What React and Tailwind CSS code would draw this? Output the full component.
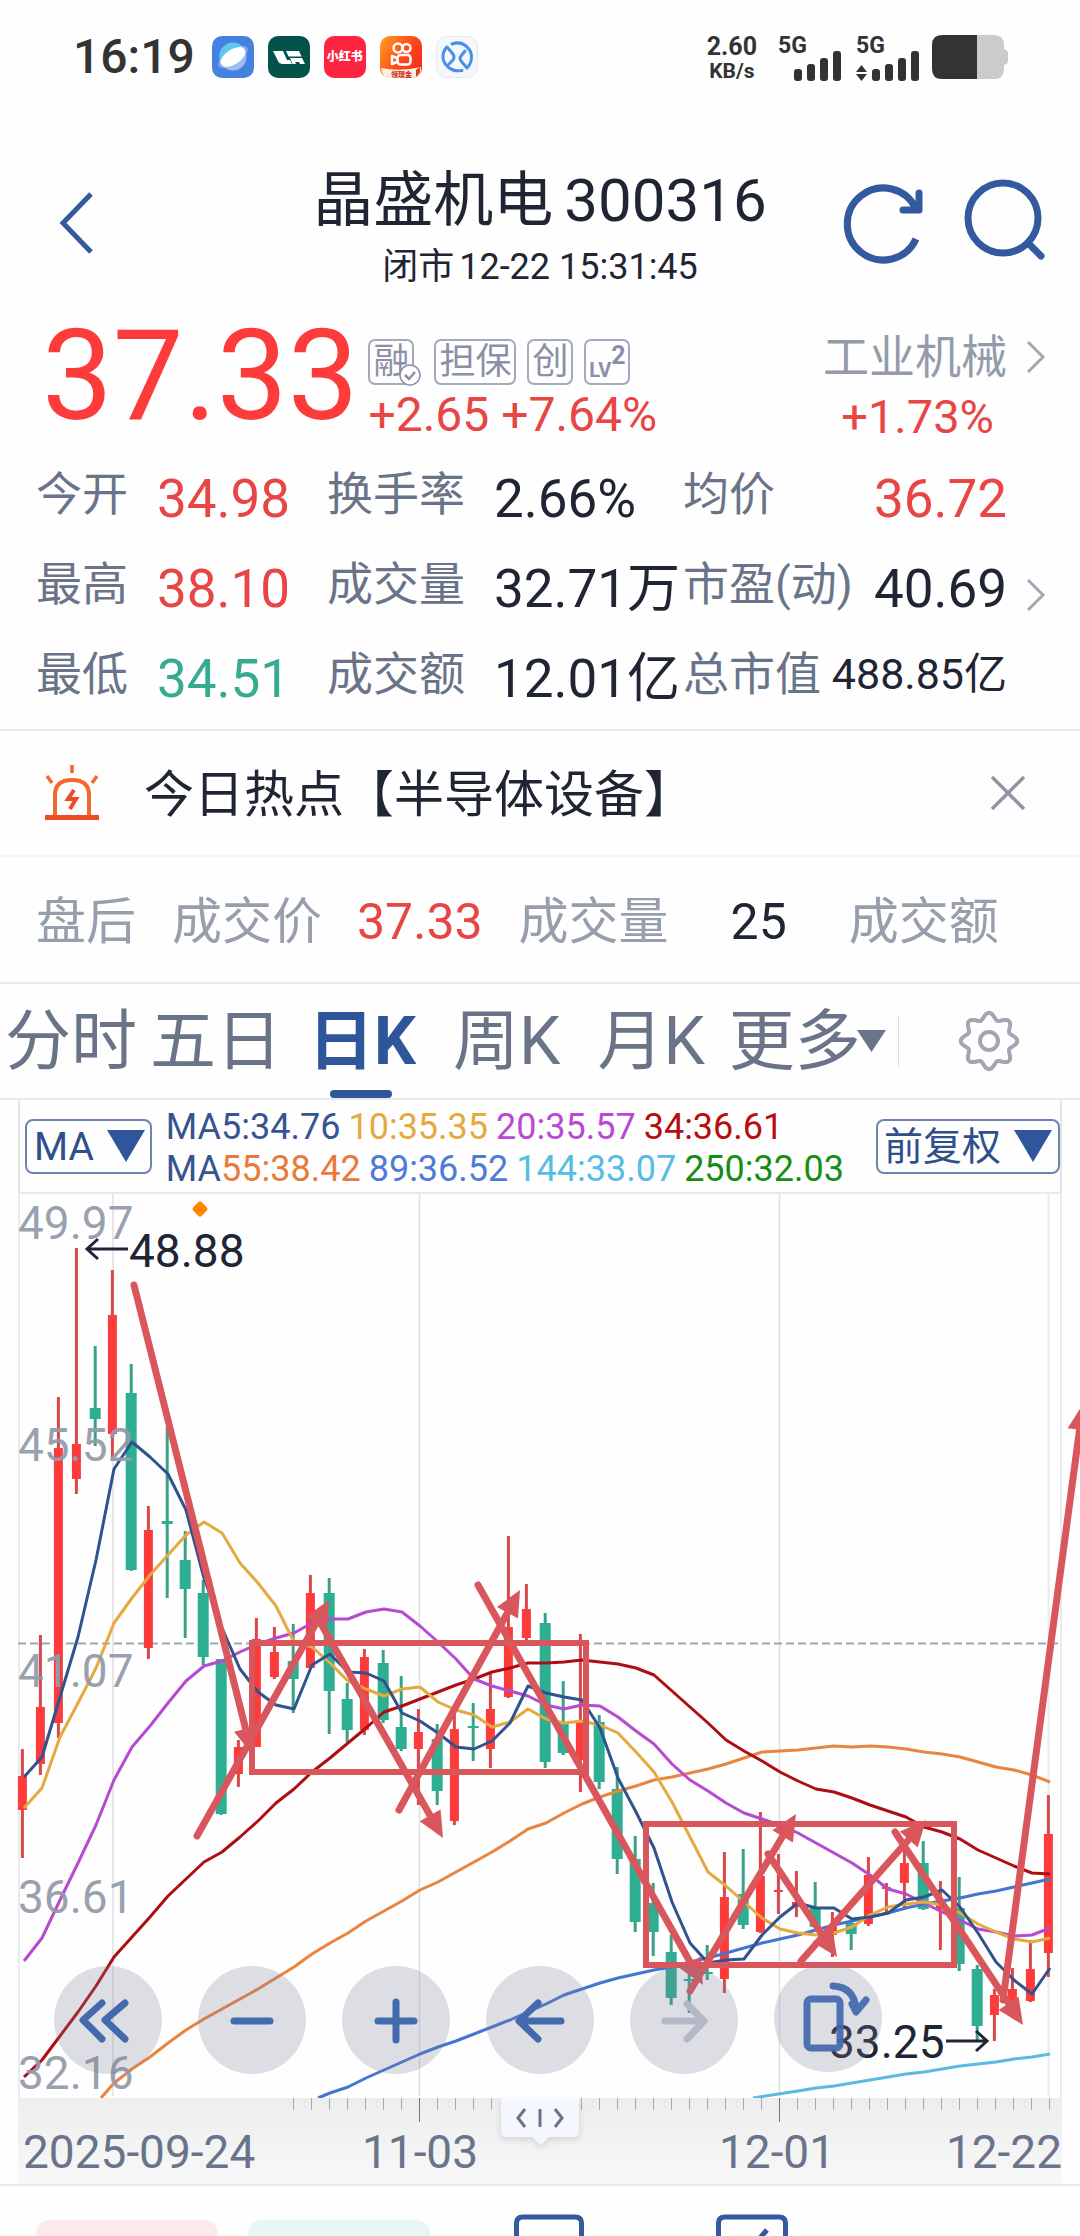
import React from "react";

const RISE = "#fd3b3b";
const FALL = "#2eae93";
const PEN = "#d9575c";

/* Candles: [trend, high, body top, body bottom, low] in chart units, oldest first. */
const candles = [
  ["r", 1749, 1776, 1810, 1858], ["r", 1635, 1707, 1764, 1775], ["r", 1397, 1448, 1723, 1738],
  ["r", 1248, 1444, 1479, 1494], ["f", 1346, 1408, 1419, 1446], ["r", 1270, 1315, 1434, 1459],
  ["f", 1364, 1393, 1570, 1571], ["r", 1506, 1530, 1648, 1659], ["f", 1427, 1521, 1524, 1598],
  ["f", 1531, 1560, 1589, 1638], ["f", 1580, 1593, 1657, 1665], ["f", 1659, 1659, 1814, 1815],
  ["r", 1740, 1747, 1774, 1787], ["r", 1618, 1639, 1747, 1747], ["r", 1627, 1652, 1677, 1679],
  ["f", 1624, 1661, 1679, 1713], ["r", 1575, 1593, 1668, 1669], ["f", 1578, 1593, 1691, 1734],
  ["f", 1683, 1699, 1730, 1742], ["r", 1649, 1657, 1730, 1735], ["f", 1650, 1663, 1720, 1723],
  ["f", 1676, 1727, 1749, 1751], ["r", 1709, 1732, 1749, 1805], ["f", 1724, 1739, 1791, 1805],
  ["r", 1713, 1729, 1821, 1825], ["f", 1703, 1726, 1728, 1761], ["r", 1673, 1709, 1749, 1768],
  ["r", 1536, 1627, 1697, 1698], ["r", 1584, 1609, 1638, 1646], ["f", 1613, 1623, 1762, 1768],
  ["f", 1681, 1723, 1753, 1755], ["r", 1634, 1722, 1760, 1792], ["f", 1715, 1722, 1782, 1789],
  ["f", 1767, 1789, 1859, 1874], ["f", 1836, 1859, 1922, 1932], ["f", 1883, 1903, 1932, 1956],
  ["f", 1935, 1952, 1998, 2005], ["f", 1970, 1979, 1981, 2013], ["f", 1945, 1972, 1974, 1980],
  ["r", 1852, 1897, 1979, 1993], ["f", 1849, 1894, 1925, 1929], ["r", 1812, 1876, 1932, 1933],
  ["r", 1854, 1890, 1892, 1914], ["r", 1871, 1902, 1907, 1917], ["f", 1882, 1907, 1927, 1928],
  ["r", 1912, 1925, 1935, 1957], ["f", 1918, 1923, 1934, 1950], ["r", 1857, 1875, 1924, 1926],
  ["r", 1883, 1887, 1889, 1912], ["r", 1848, 1863, 1883, 1909], ["f", 1841, 1863, 1909, 1910],
  ["r", 1881, 1900, 1909, 1950], ["f", 1877, 1908, 1964, 1971], ["f", 1965, 1969, 2026, 2040],
  ["r", 1989, 1995, 2015, 2041], ["r", 1968, 1989, 2002, 2003], ["r", 1940, 1969, 2001, 2002],
  ["r", 1795, 1834, 1953, 1977],
];

const ma5 = [1777, 1757, 1697, 1637, 1560, 1469, 1442, 1457, 1474, 1510, 1578, 1628, 1669, 1692, 1705, 1709, 1665, 1654, 1672, 1673, 1681, 1713, 1721, 1733, 1747, 1749, 1741, 1723, 1686, 1693, 1697, 1700, 1728, 1778, 1812, 1848, 1902, 1943, 1963, 1960, 1959, 1935, 1917, 1903, 1908, 1908, 1919, 1917, 1913, 1900, 1897, 1890, 1907, 1933, 1962, 1980, 1994, 1968];
const ma10 = [1808, 1788, 1737, 1703, 1668, 1623, 1598, 1575, 1555, 1535, 1522, 1533, 1563, 1583, 1606, 1642, 1647, 1663, 1681, 1689, 1696, 1689, 1687, 1702, 1710, 1715, 1727, 1722, 1709, 1719, 1723, 1721, 1725, 1733, 1752, 1772, 1802, 1837, 1872, 1886, 1902, 1918, 1929, 1933, 1935, 1933, 1927, 1915, 1907, 1904, 1902, 1905, 1913, 1924, 1932, 1939, 1942, 1938];
const ma20 = [1961, 1938, 1900, 1863, 1825, 1780, 1747, 1726, 1703, 1681, 1666, 1661, 1652, 1644, 1638, 1633, 1623, 1619, 1619, 1612, 1609, 1612, 1626, 1642, 1659, 1679, 1686, 1691, 1696, 1705, 1709, 1705, 1706, 1717, 1731, 1744, 1764, 1780, 1791, 1803, 1813, 1819, 1825, 1833, 1843, 1853, 1863, 1875, 1889, 1894, 1903, 1912, 1920, 1929, 1932, 1936, 1935, 1928];
const ma34 = [2077, 2060, 2036, 2012, 1986, 1957, 1937, 1917, 1896, 1879, 1862, 1852, 1837, 1821, 1803, 1789, 1772, 1758, 1743, 1728, 1712, 1706, 1699, 1692, 1685, 1679, 1672, 1668, 1663, 1663, 1662, 1660, 1662, 1664, 1668, 1675, 1691, 1707, 1723, 1740, 1751, 1761, 1772, 1781, 1789, 1792, 1798, 1805, 1811, 1817, 1827, 1832, 1839, 1850, 1858, 1866, 1873, 1874];
const ma55 = [2083, 2069, 2057, 2043, 2030, 2019, 2009, 1999, 1989, 1978, 1967, 1954, 1943, 1933, 1921, 1911, 1901, 1890, 1882, 1872, 1862, 1852, 1841, 1829, 1823, 1813, 1804, 1797, 1791, 1786, 1780, 1777, 1773, 1769, 1764, 1758, 1752, 1751, 1750, 1748, 1746, 1747, 1746, 1747, 1749, 1752, 1754, 1757, 1762, 1767, 1770, 1775, 1782];
const ma89 = [2093, 2087, 2078, 2070, 2062, 2054, 2047, 2041, 2034, 2027, 2020, 2012, 2004, 1995, 1989, 1983, 1978, 1974, 1970, 1967, 1962, 1958, 1953, 1948, 1943, 1939, 1935, 1930, 1925, 1921, 1917, 1913, 1908, 1904, 1901, 1898, 1894, 1891, 1887, 1883, 1879];
const ma144 = [2091, 2088, 2086, 2083, 2080, 2077, 2074, 2072, 2069, 2066, 2064, 2062, 2059, 2057, 2054];

const track = (ys, from = 0, lead = "") =>
  (lead + " " + ys.map((y, i) => `${24 + (i + from) * 18},${y}`).join(" ")).trim();

const averages = [
  { color: "#e8853f", points: track(ma55, 5, "101,2098") },
  { color: "#5bbbdf", points: track(ma144, 43, "753,2098") },
  { color: "#4475d0", points: track(ma89, 17, "318,2098") },
  { color: "#ae0e12", points: track(ma34) },
  { color: "#b64ad0", points: track(ma20) },
  { color: "#e5a93f", points: track(ma10) },
  { color: "#30538f", points: track(ma5) },
];

/* Hand-drawn arrows: start x, start y, tip x, tip y. */
const arrows = [
  [134, 1285, 252, 1754], [197, 1836, 329, 1600], [320, 1622, 443, 1838], [399, 1810, 520, 1590],
  [478, 1585, 703, 1985], [690, 1991, 796, 1814], [768, 1854, 837, 1957], [801, 1961, 926, 1820],
  [895, 1832, 1023, 2025], [1003, 2000, 1083, 1404],
];

function PenArrow({ x1, y1, x2, y2 }) {
  const len = Math.hypot(x2 - x1, y2 - y1);
  const ux = (x2 - x1) / len;
  const uy = (y2 - y1) / len;
  const bx = x2 - ux * 26;
  const by = y2 - uy * 26;
  return (
    <g>
      <line x1={x1} y1={y1} x2={bx} y2={by} stroke={PEN} strokeWidth="7" strokeLinecap="round" />
      <polygon points={`${x2},${y2} ${bx - uy * 12},${by + ux * 12} ${bx + uy * 12},${by - ux * 12}`} fill={PEN} />
    </g>
  );
}

function CandleChart() {
  return (
    <svg viewBox="0 1192 1080 906" className="block w-full overflow-visible" role="img" aria-label="日K">
      <g stroke="#dfe0e3" strokeWidth="1.5">
        <path d="M113 1192V2096M419.500 1192V2096M779.500 1192V2096" />
        <path d="M19 1192V2098M1048.500 1192V2096M1061 1192V2098" stroke="#e9eaec" strokeWidth="2" />
        <path d="M18 1193H1062" stroke="#e9eaec" strokeWidth="2" />
      </g>
      <path d="M18 1643.500H1061" stroke="#9da6b3" strokeWidth="2" strokeDasharray="8 4" />
      {candles.map(([t, high, top, bottom, low], i) => {
        const up = t === "r";
        const cx = (up ? 22.4 : 23.2) + i * 18;
        const w = up ? 9 : 11;
        return (
          <g key={i} fill={up ? RISE : FALL}>
            <rect x={cx - 1.5} y={high} width="3" height={low - high} fill={up ? "#d9494b" : "#3aa189"} />
            <rect x={cx - w / 2} y={top} width={w} height={bottom - top} />
          </g>
        );
      })}
      <g fill="none" strokeWidth="3" strokeLinejoin="round">
        {averages.map((a) => (
          <polyline key={a.color} points={a.points} stroke={a.color} />
        ))}
      </g>
      <g fill="#939baa" fillOpacity="0.95" fontSize="46" fontFamily="Roboto, sans-serif">
        <text x="18" y="1239">49.97</text>
        <text x="18" y="1461">45.52</text>
        <text x="18" y="1687">41.07</text>
        <text x="18" y="1913">36.61</text>
        <text x="18" y="2089">32.16</text>
      </g>
      <path d="M200 1204L205 1209L200 1214L195 1209Z" fill="#ff8400" stroke="#ff8400" strokeWidth="5" strokeLinejoin="round" />
      <g fill="#1f2533" fontSize="46" fontFamily="Roboto, sans-serif">
        <text x="129" y="1267">48.88</text>
        <text x="829" y="2058">33.25</text>
      </g>
      <g fill="none" stroke="#1f2533" strokeWidth="3">
        <path d="M128 1249H87M98 1239L87 1249L98 1259" />
        <path d="M946 2041H987M976 2031L987 2041L976 2051" />
      </g>
      <g fill="none" stroke={PEN} strokeWidth="6">
        <rect x="252" y="1643" width="334" height="129" />
        <rect x="646" y="1824" width="308" height="141" />
      </g>
      {arrows.map(([x1, y1, x2, y2], i) => (
        <PenArrow key={i} x1={x1} y1={y1} x2={x2} y2={y2} />
      ))}
    </svg>
  );
}

function AppIcons() {
  return (
    <div className="flex gap-[14px]">
      <svg className="size-[42px]" viewBox="0 0 42 42">
        <rect width="42" height="42" rx="10" fill="#4582e0" />
        <circle cx="21" cy="21" r="13.500" fill="#9dbcf0" />
        <path d="M8 24A13.500 13.500 0 0 1 33 14Z" fill="#5cc8f2" />
        <ellipse cx="21" cy="21" rx="17" ry="7" transform="rotate(-33 21 21)" fill="#a9c4f3" opacity=".6" />
        <ellipse cx="21" cy="21" rx="14" ry="7.500" transform="rotate(-33 21 21)" fill="#fff" />
      </svg>
      <svg className="size-[42px]" viewBox="0 0 42 42">
        <rect width="42" height="42" rx="10" fill="#04534b" />
        <path d="M5 15H15L19 24H22L24 28H15Q11 28 10 25Z" fill="#fff" />
        <path d="M18 15H31L33.500 20.500H20.500ZM22 22H34L37 28H32L31 26H27L28 28H24.500Z" fill="#fff" />
      </svg>
      <span className="flex size-[42px] items-center justify-center rounded-[10px] bg-[#fe2341] text-[12px] leading-none font-black text-white">小红书</span>
      <svg className="size-[42px]" viewBox="0 0 42 42">
        <defs>
          <linearGradient id="kwai" x1="0" y1="0" x2="1" y2="0.600">
            <stop offset="0" stopColor="#ffa41c" />
            <stop offset="0.600" stopColor="#fd4a1b" />
            <stop offset="1" stopColor="#f5321c" />
          </linearGradient>
        </defs>
        <rect width="42" height="42" rx="10" fill="url(#kwai)" />
        <path d="M1 32Q20 36 41 31V34Q40 42 32 42H10Q2 42 1 32Z" fill="#fdeedd" />
        <g fill="none" stroke="#fff" strokeWidth="2.500">
          <circle cx="18" cy="12" r="4.500" />
          <circle cx="26.500" cy="12" r="4" />
          <rect x="17.500" y="19" width="13" height="9.500" rx="3" />
          <path d="M17 22L12 20V28L17 26" strokeLinejoin="round" />
        </g>
        <text x="11" y="40.500" fontSize="7" fontWeight="900" fill="#d3341c" fontFamily="Noto Sans CJK SC, sans-serif">领现金</text>
        <path d="M36 41Q41 38 40 31L36 34Z" fill="#e23b1c" />
      </svg>
      <svg className="size-[42px]" viewBox="0 0 42 42">
        <rect x="0.500" y="0.500" width="41" height="41" rx="10" fill="#f4f7fb" stroke="#e6e9ee" />
        <g fill="none" stroke="#4a8fe8" strokeWidth="3" strokeLinecap="round" strokeLinejoin="round">
          <path d="M16 8Q24 5 30 10Q36 15 35.500 22Q35 28 31 32L25 25Q23 22 25 20L29 15" />
          <path d="M26 34.500Q18 36 12 31Q6.500 26 7 20Q7.500 14 11 11L17 18Q19 21 17 24L13 28" />
        </g>
      </svg>
    </div>
  );
}

function SignalBars() {
  return (
    <svg className="h-[30px] w-[48px]" viewBox="0 0 48 30" fill="#333">
      <rect x="0" y="18" width="8" height="12" rx="3" />
      <rect x="13" y="13" width="8" height="17" rx="3" />
      <rect x="26" y="7" width="8" height="23" rx="3" />
      <rect x="39" y="0" width="8" height="30" rx="3" />
    </svg>
  );
}

function StatusBar() {
  return (
    <div className="flex h-[114px] items-center justify-between pr-[72px] pl-[73px] text-[#333]">
      <div className="flex items-center gap-[17px]">
        <span className="text-[48px] leading-none font-medium">16:19</span>
        <AppIcons />
      </div>
      <div className="flex items-center">
        <div className="flex flex-col items-center pt-1 font-bold">
          <span className="text-[25px] leading-[24px]">2.60</span>
          <span className="text-[21px] leading-[24px]">KB/s</span>
        </div>
        <div className="ml-[21px] flex flex-col pt-1">
          <span className="text-[23px] leading-[18px] font-bold">5G</span>
          <span className="-mt-1 pl-4"><SignalBars /></span>
        </div>
        <div className="ml-[14px] flex flex-col pt-1">
          <span className="text-[23px] leading-[18px] font-bold">5G</span>
          <span className="-mt-1 flex items-end gap-[5px]">
            <svg className="h-[16px] w-[11px]" viewBox="0 0 11 16" fill="#333"><path d="M5.500 0L11 7H0ZM5.500 16L0 9H11Z" /></svg>
            <SignalBars />
          </span>
        </div>
        <svg className="ml-[12px] h-[44px] w-[76px]" viewBox="0 0 76 44">
          <path d="M45 0H62Q72 0 72 10V14Q76 15 76 18V26Q76 29 72 30V34Q72 44 62 44H45Z" fill="#cbcbcb" />
          <path d="M45 0H10Q0 0 0 10V34Q0 44 10 44H45Z" fill="#333" />
        </svg>
      </div>
    </div>
  );
}

function Header() {
  return (
    <header className="grid grid-cols-[1fr_auto_1fr] items-start pt-[49px] pb-[14px]">
      <button type="button" aria-label="返回" className="mt-[28px] ml-[58px] justify-self-start">
        <svg className="block h-[64px] w-[36px]" viewBox="0 0 36 64" fill="none" stroke="#33599e" strokeWidth="5"><path d="M33 3L5 32L33 61" /></svg>
      </button>
      <div className="text-center text-[#1f2533]">
        <h1 className="flex items-baseline gap-[11px] text-[60px] leading-[76px] font-normal"><span>晶盛机电</span><span>300316</span></h1>
        <p className="flex justify-center gap-[5px] text-[36px] leading-[56px]"><span>闭市</span><span>12-22 15:31:45</span></p>
      </div>
      <div className="mt-[16px] mr-[35px] flex items-start gap-[38px] justify-self-end">
        <button type="button" aria-label="刷新" className="mt-1">
          <svg className="block size-[82px]" viewBox="0 0 82 82" fill="none" stroke="#33599e" strokeWidth="7">
            <path d="M73 26A36 36 0 1 0 73 56" />
            <path d="M76 10V27H60" strokeLinecap="round" strokeLinejoin="round" />
          </svg>
        </button>
        <button type="button" aria-label="搜索">
          <svg className="block size-[82px]" viewBox="0 0 82 82" fill="none" stroke="#33599e" strokeWidth="7">
            <circle cx="40" cy="39" r="35" />
            <path d="M65 64L78 77" strokeLinecap="round" />
          </svg>
        </button>
      </div>
    </header>
  );
}

function Chevron() {
  return (
    <svg className="h-[34px] w-[20px]" viewBox="0 0 20 34" fill="none" stroke="#a3a7b3" strokeWidth="3"><path d="M2 2L17 17L2 32" /></svg>
  );
}

function Quote() {
  const badge = "relative flex h-[46px] items-center justify-center rounded-[7px] border-2 border-[#a5a9bd] text-[#8b90a8]";
  return (
    <section className="flex items-start pr-[34px] pl-[42px]">
      <strong className="pt-[3px] text-[126px] leading-[128px] font-normal text-[#fd3b3b]">37.33</strong>
      <div className="ml-[10px] pt-[30px]">
        <div className="flex gap-[11px] text-[36px] leading-none">
          <span className={badge + " mr-[9px] w-[46px]"}>
            融
            <svg className="absolute -right-[9px] -bottom-[3px] size-[22px]" viewBox="0 0 22 22" fill="#fff" stroke="#8b90a8" strokeWidth="1.500"><circle cx="11" cy="11" r="10" /><path d="M6 11L10 15L16 8" fill="none" strokeWidth="2.500" /></svg>
          </span>
          <span className={badge + " w-[82px]"}>担保</span>
          <span className={badge + " w-[46px]"}>创</span>
          <span className={badge + " w-[46px] text-[20px] font-bold"}>
            <span className="pt-4">LV</span><sup className="top-0 self-start pt-[2px] text-[25px] leading-none">2</sup>
          </span>
        </div>
        <p className="text-[48px] leading-[60px] text-[#e84545]">+2.65 +7.64%</p>
      </div>
      <a href="#industry" className="ml-auto flex flex-col items-end pt-[19px]">
        <span className="flex items-center gap-[19px] text-[46px] leading-[58px] text-[#949bab]">工业机械 <Chevron /></span>
        <span className="pr-[52px] text-[47px] leading-[62px] text-[#e84545]">+1.73%</span>
      </a>
    </section>
  );
}

const stats = [
  ["今开", "34.98", "text-[#e84545]", "换手率", "2.66%", "均价", "36.72", "text-[53px] text-[#e84545]"],
  ["最高", "38.10", "text-[#e84545]", "成交量", "32.71万", "市盈(动)", "40.69", "text-[53px]"],
  ["最低", "34.51", "text-[#35ab91]", "成交额", "12.01亿", "总市值", "488.85亿", "mb-[10px] text-[43px]"],
];

function Stats() {
  const label = "mb-[10px] text-[46px] text-[#6a7489]";
  return (
    <dl className="border-b-2 border-[#e8e9eb] pt-[6px] pb-[5px] pl-[36px] leading-[60px] text-[#1f2533]">
      {stats.map((s) => (
        <div key={s[0]} className="grid h-[90px] grid-cols-[121px_170px_167px_189px_1fr_73px] items-center">
          <dt className={label}>{s[0]}</dt>
          <dd className={"text-[53px] " + s[2]}>{s[1]}</dd>
          <dt className={label}>{s[3]}</dt>
          <dd className="text-[53px] whitespace-nowrap">{s[4]}</dd>
          <div className="flex items-center justify-between whitespace-nowrap">
            <dt className={label}>{s[5]}</dt>
            <dd className={s[7]}>{s[6]}</dd>
          </div>
          <dd className="pt-3 pl-[19px]">{s[6] === "40.69" && <Chevron />}</dd>
        </div>
      ))}
    </dl>
  );
}

function HotTopic() {
  return (
    <section className="flex h-[126px] items-center border-b-2 border-[#f6f6f8] pr-[53px] pl-[43px]">
      <svg className="h-[58px] w-[58px]" viewBox="0 0 58 58" fill="none" stroke="#f4672e" strokeWidth="4">
        <path d="M12 52V31Q12 16 29 16Q46 16 46 31V52" />
        <path d="M2 53.500H56" strokeWidth="5" stroke="#ee4b22" />
        <path d="M29 1V9M4 12L9 19M54 12L49 19" strokeWidth="3.500" />
        <path d="M31 26L25 35H33L27 45" strokeWidth="4" stroke="#ee4b22" />
      </svg>
      <p className="mt-1 ml-[43px] text-[50px] leading-[60px] text-[#1f2533]">今日热点【半导体设备】</p>
      <button type="button" aria-label="关闭" className="ml-auto">
        <svg className="block size-[38px]" viewBox="0 0 38 38" stroke="#9095a5" strokeWidth="3.500"><path d="M3 3L35 35M35 3L3 35" /></svg>
      </button>
    </section>
  );
}

function AfterHours() {
  return (
    <dl className="flex h-[127px] items-center border-b-2 border-[#e8e9eb] pt-1 pl-[36px] text-[50px] leading-none text-[#979eac]">
      <dt>盘后</dt>
      <dt className="ml-[36px]">成交价</dt>
      <dd className="ml-[35px] text-[#e84545]">37.33</dd>
      <dt className="ml-[36px]">成交量</dt>
      <dd className="ml-[62px] text-[#1f2533]">25</dd>
      <dt className="ml-[62px]">成交额</dt>
    </dl>
  );
}

function Gear() {
  const pts = Array.from({ length: 121 }, (_, i) => {
    const a = (i / 120) * Math.PI * 2;
    const r = 25 + 3.2 * Math.cos(8 * a);
    return `${(31 + r * Math.sin(a)).toFixed(1)},${(31 - r * Math.cos(a)).toFixed(1)}`;
  }).join(" ");
  return (
    <svg className="block size-[62px]" viewBox="0 0 62 62" fill="none" stroke="#a2a6b2" strokeWidth="4">
      <polygon points={pts} strokeLinejoin="round" />
      <circle cx="31" cy="31" r="9" />
    </svg>
  );
}

function Tabs() {
  return (
    <nav className="flex h-[116px] border-b-2 border-[#e8e9eb] pl-[5px] text-[66px] leading-[113px] whitespace-nowrap text-[#6a7489]">
      <button type="button">分时</button>
      <button type="button" className="ml-[13px]">五日</button>
      <button type="button" className="relative ml-[26px] font-bold text-[#2f569b]" aria-current="page">
        日K
        <span className="absolute bottom-0 left-[22px] h-[8px] w-[62px] rounded-full bg-[#2f569b]" />
      </button>
      <button type="button" className="ml-[37px]">周K</button>
      <button type="button" className="ml-[37px]">月K</button>
      <button type="button" className="ml-[24px] flex items-center">
        更多
        <svg className="-ml-[4px] h-[22px] w-[29px]" viewBox="0 0 29 22" fill="#6a7489"><path d="M0 0H29L14.500 22Z" /></svg>
      </button>
      <span className="ml-[12px] h-[52px] self-center border-l border-[#dcdde0]" />
      <button type="button" aria-label="设置" className="mr-[60px] ml-auto"><Gear /></button>
    </nav>
  );
}

function Triangle() {
  return <svg className="h-[32px] w-[38px]" viewBox="0 0 38 32" fill="#2f569b"><path d="M0 0H38L19 32Z" /></svg>;
}

function ChartHeader() {
  const box = "flex h-[55px] items-center rounded-[8px] border-2 border-[#6d85ae] text-[39px] leading-none text-[#2f4f8a]";
  return (
    <div className="mx-[18px] flex h-[92px] items-center border-x-2 border-[#e3e4e7] pl-[5px]">
      <button type="button" className={box + " gap-[13px] pr-[5px] pl-[7px]"}><span className="pt-[3px]">MA</span><Triangle /></button>
      <div className="mt-1 ml-[14px] text-[36px] leading-[42px] whitespace-nowrap">
        <p className="flex gap-[8px] text-[#34558f]">
          <span>MA5:34.76</span>
          <span className="text-[#e5a93f]">10:35.35</span>
          <span className="text-[#bb48d4]">20:35.57</span>
          <span className="text-[#b80d10]">34:36.61</span>
        </p>
        <p className="flex gap-[8px] text-[#34558f]">
          <span>MA<span className="text-[#ea7a3a]">55:38.42</span></span>
          <span className="text-[#4f7bd8]">89:36.52</span>
          <span className="text-[#55bde2]">144:33.07</span>
          <span className="text-[#168e16]">250:32.03</span>
        </p>
      </div>
      <button type="button" className={box + " ml-auto gap-[13px] pr-[6px] pl-[6px]"}><span className="pt-[3px]">前复权</span><Triangle /></button>
    </div>
  );
}

const controls = [
  { label: "快退", d: "M48 37L29 54L48 73M71 37L51 54L71 73" },
  { label: "缩小", d: "M36 55H72" },
  { label: "放大", d: "M36 55H72M54 36V74" },
  { label: "左移", d: "M75 55H34M52 37L33 55L52 73" },
  { label: "右移", d: "M35 55H74M57 38L74 55L57 73", off: true },
];

function Controls() {
  return (
    <div className="absolute bottom-[22px] left-[54px] flex items-center gap-[36px]">
      {controls.map((c) => (
        <button key={c.label} type="button" aria-label={c.label} disabled={c.off} className="size-[108px] rounded-full bg-[#7a7d98]/25">
          <svg viewBox="0 0 108 108" fill="none" stroke={c.off ? "#b4b7c8" : "#446aae"} strokeWidth="7" strokeLinecap="round" strokeLinejoin="round"><path d={c.d} /></svg>
        </button>
      ))}
      <button type="button" aria-label="横屏" className="mb-1 size-[108px] rounded-full bg-[#7a7d98]/25">
        <svg viewBox="0 0 108 108" fill="none" stroke="#446aae" strokeOpacity=".95" strokeWidth="7" strokeLinecap="round" strokeLinejoin="round">
          <rect x="33" y="35" width="33" height="49" rx="4" />
          <path d="M59 22Q80 23 82 45M78 40L82 48L92 36" />
        </svg>
      </button>
    </div>
  );
}

function TimeAxis() {
  return (
    <div className="relative mx-[18px] bg-linear-to-b from-[#ededee] to-[#f8f8f8] text-[46px] text-[#69738a]">
      <svg viewBox="0 0 1044 26" className="block w-full" stroke="#a5aab3" strokeWidth="1">
        {Array.from({ length: 43 }, (_, i) => {
          const major = i === 7 || i === 27;
          return <path key={i} d={`M${275.5 + i * 18} 0V${major ? 24 : 12}`} stroke={major ? "#6f7787" : undefined} />;
        })}
      </svg>
      <div className="grid grid-cols-[325px_144px_1fr_128px_1fr] pb-[4px] pl-[5px] leading-[56px] whitespace-nowrap">
        <time>2025-09-24</time>
        <time className="text-center">11-03</time>
        <span />
        <time className="text-center">12-01</time>
        <time className="text-right">12-22</time>
      </div>
      <button type="button" aria-label="拖动" className="absolute top-0 left-[473px]">
        <svg className="block h-[60px] w-[98px] drop-shadow-md" viewBox="0 0 98 60">
          <path d="M10 0H88V33Q88 39 82 39H58L50 47L41 39H16Q10 39 10 33Z" fill="#f5f7ff" />
          <path d="M34 11L27 20L34 29M49 11V29M64 11L71 20L64 29" fill="none" stroke="#6a7489" strokeWidth="3" />
        </svg>
      </button>
    </div>
  );
}

function BottomBar() {
  return (
    <footer className="flex h-[52px] items-end overflow-hidden border-t-2 border-[#e8e9eb] pl-[36px]">
      <span className="h-[16px] w-[182px] rounded-t-[14px] bg-[#fdeaea]" />
      <span className="ml-[30px] h-[16px] w-[182px] rounded-t-[14px] bg-[#e8f6f3]" />
      <svg className="ml-[84px] h-[22px] w-[70px]" viewBox="0 0 70 22" fill="none" stroke="#33599e" strokeWidth="5"><path d="M2.500 24V9Q2.500 3 9 3H61Q67.500 3 67.500 9V24" /></svg>
      <svg className="ml-[132px] h-[22px] w-[72px]" viewBox="0 0 72 22" fill="none" stroke="#33599e" strokeWidth="5"><path d="M2.500 24V9Q2.500 3 9 3H63Q69.500 3 69.500 9V24M51 16L43 25" /></svg>
    </footer>
  );
}

export default function App() {
  return (
    <main className="w-full overflow-hidden bg-[#fefefe] font-[Roboto,'Noto_Sans_CJK_SC',sans-serif]">
      <StatusBar />
      <Header />
      <Quote />
      <Stats />
      <HotTopic />
      <AfterHours />
      <Tabs />
      <ChartHeader />
      <div className="relative">
        <CandleChart />
        <Controls />
      </div>
      <TimeAxis />
      <BottomBar />
    </main>
  );
}
